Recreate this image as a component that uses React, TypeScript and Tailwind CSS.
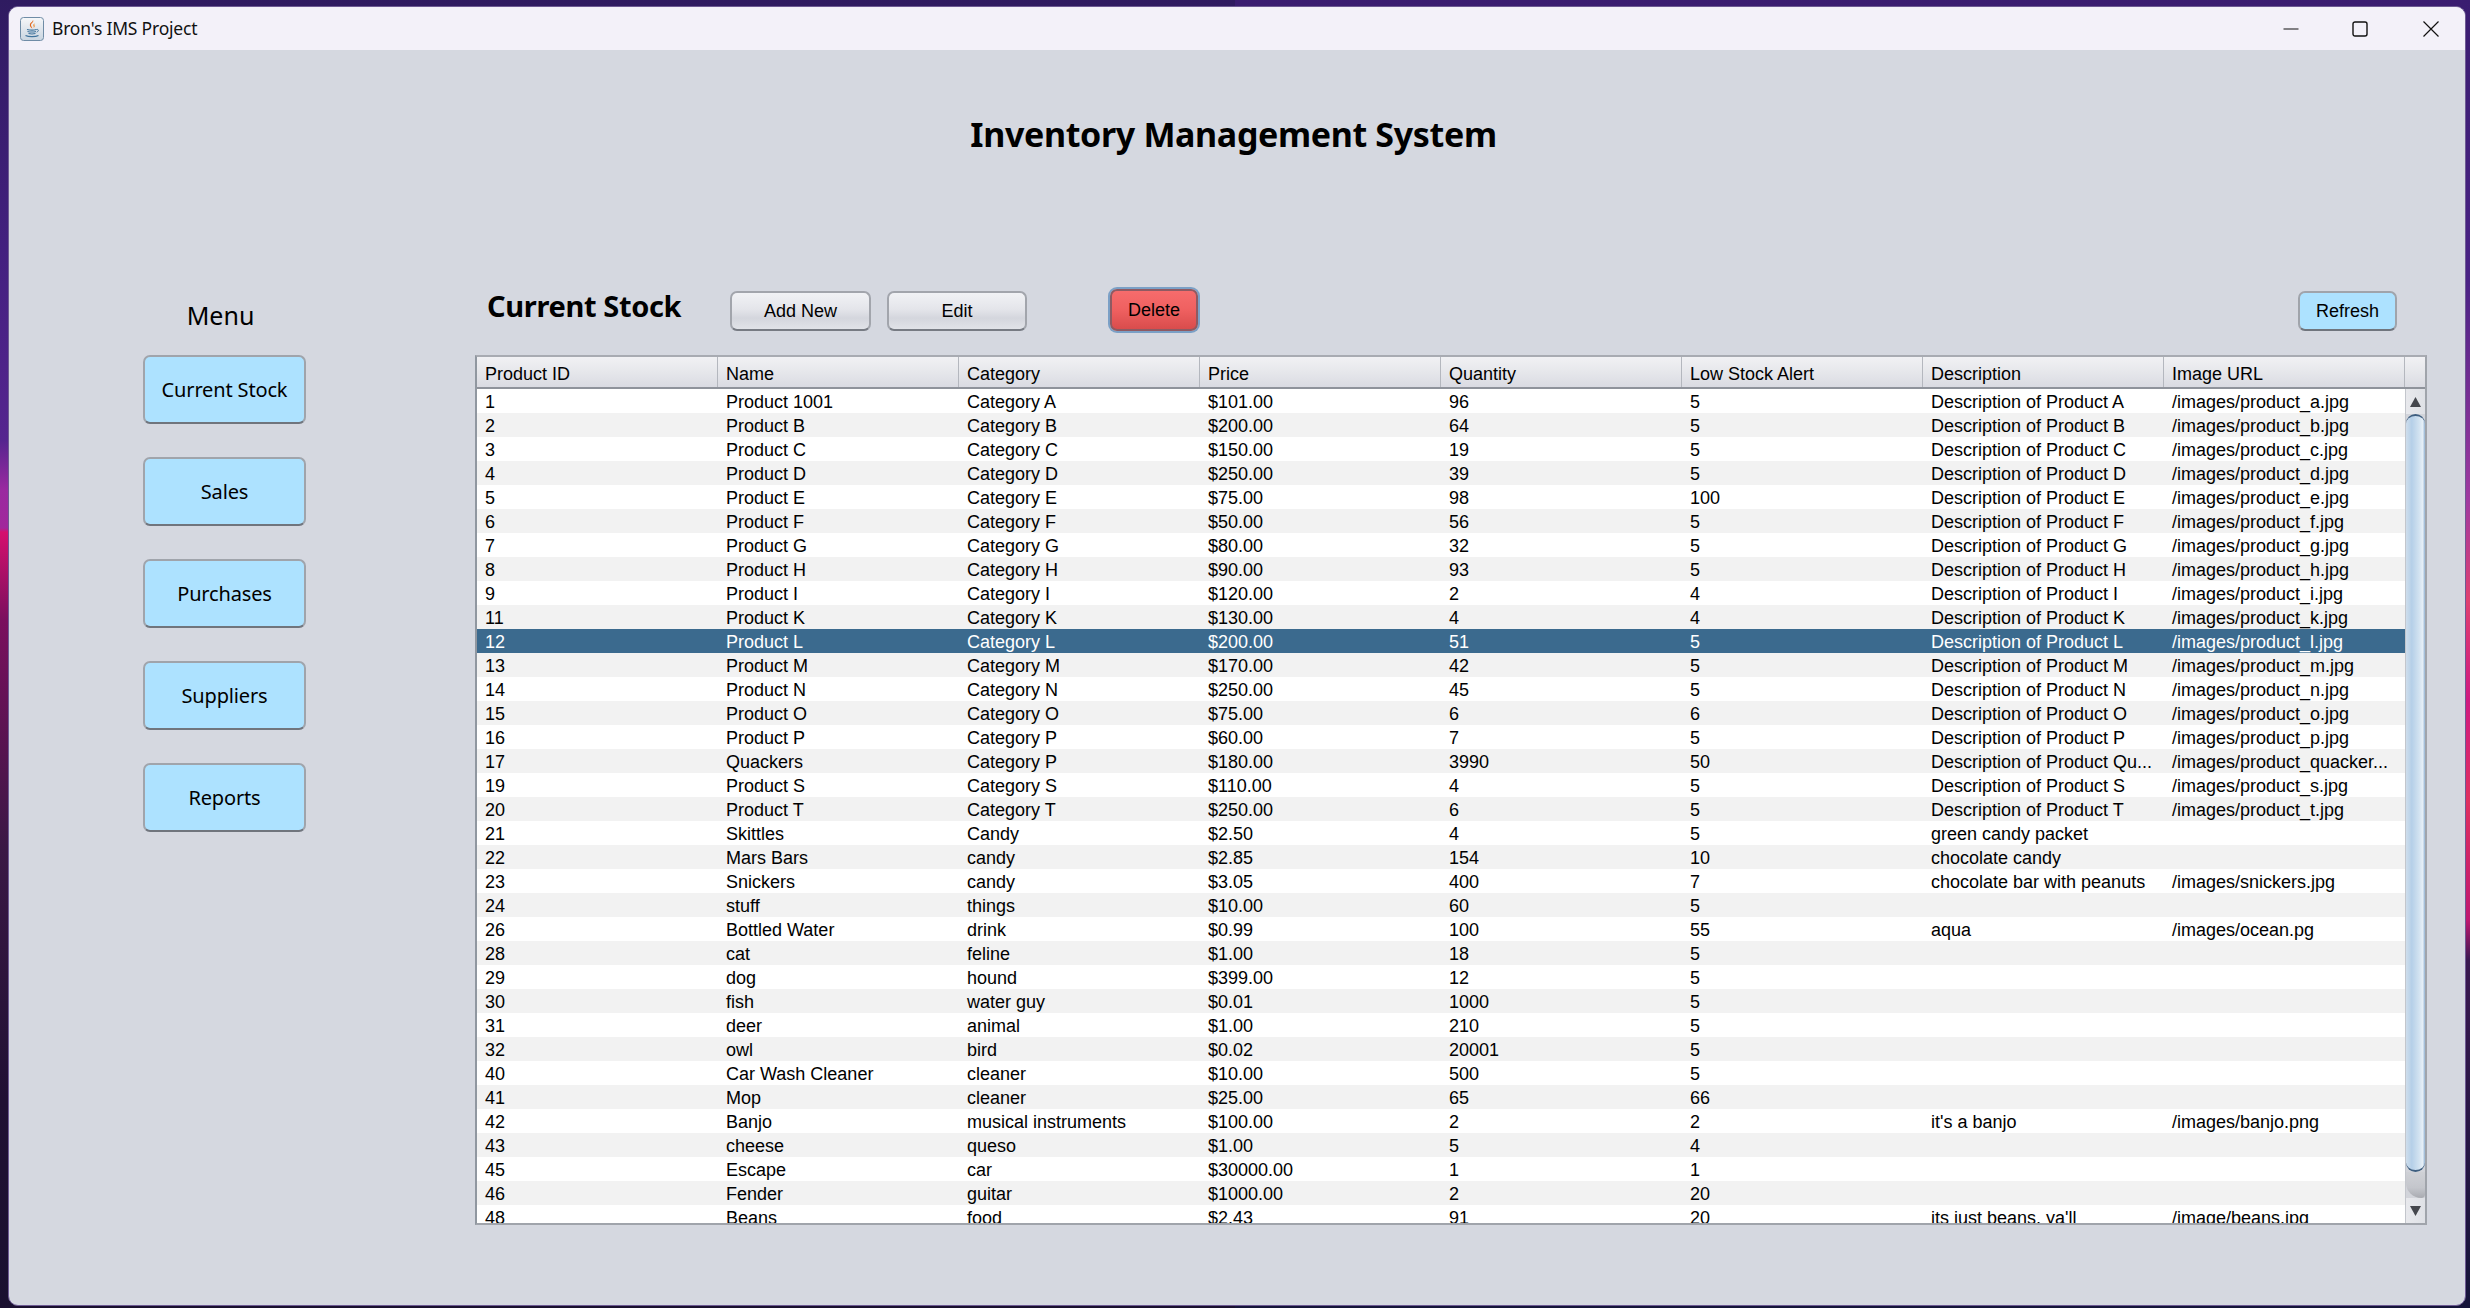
import React from "react";

const D = (c: string) => `Description of Product ${c}`;
const I = (c: string) => `/images/product_${c}.jpg`;
const rows: string[][] = [
  ["1", "Product 1001", "Category A", "$101.00", "96", "5", D("A"), I("a")],
  ["2", "Product B", "Category B", "$200.00", "64", "5", D("B"), I("b")],
  ["3", "Product C", "Category C", "$150.00", "19", "5", D("C"), I("c")],
  ["4", "Product D", "Category D", "$250.00", "39", "5", D("D"), I("d")],
  ["5", "Product E", "Category E", "$75.00", "98", "100", D("E"), I("e")],
  ["6", "Product F", "Category F", "$50.00", "56", "5", D("F"), I("f")],
  ["7", "Product G", "Category G", "$80.00", "32", "5", D("G"), I("g")],
  ["8", "Product H", "Category H", "$90.00", "93", "5", D("H"), I("h")],
  ["9", "Product I", "Category I", "$120.00", "2", "4", D("I"), I("i")],
  ["11", "Product K", "Category K", "$130.00", "4", "4", D("K"), I("k")],
  ["12", "Product L", "Category L", "$200.00", "51", "5", D("L"), I("l")],
  ["13", "Product M", "Category M", "$170.00", "42", "5", D("M"), I("m")],
  ["14", "Product N", "Category N", "$250.00", "45", "5", D("N"), I("n")],
  ["15", "Product O", "Category O", "$75.00", "6", "6", D("O"), I("o")],
  ["16", "Product P", "Category P", "$60.00", "7", "5", D("P"), I("p")],
  ["17", "Quackers", "Category P", "$180.00", "3990", "50", "Description of Product Qu...", "/images/product_quacker..."],
  ["19", "Product S", "Category S", "$110.00", "4", "5", D("S"), I("s")],
  ["20", "Product T", "Category T", "$250.00", "6", "5", D("T"), I("t")],
  ["21", "Skittles", "Candy", "$2.50", "4", "5", "green candy packet", ""],
  ["22", "Mars Bars", "candy", "$2.85", "154", "10", "chocolate candy", ""],
  ["23", "Snickers", "candy", "$3.05", "400", "7", "chocolate bar with peanuts", "/images/snickers.jpg"],
  ["24", "stuff", "things", "$10.00", "60", "5", "", ""],
  ["26", "Bottled Water", "drink", "$0.99", "100", "55", "aqua", "/images/ocean.pg"],
  ["28", "cat", "feline", "$1.00", "18", "5", "", ""],
  ["29", "dog", "hound", "$399.00", "12", "5", "", ""],
  ["30", "fish", "water guy", "$0.01", "1000", "5", "", ""],
  ["31", "deer", "animal", "$1.00", "210", "5", "", ""],
  ["32", "owl", "bird", "$0.02", "20001", "5", "", ""],
  ["40", "Car Wash Cleaner", "cleaner", "$10.00", "500", "5", "", ""],
  ["41", "Mop", "cleaner", "$25.00", "65", "66", "", ""],
  ["42", "Banjo", "musical instruments", "$100.00", "2", "2", "it's a banjo", "/images/banjo.png"],
  ["43", "cheese", "queso", "$1.00", "5", "4", "", ""],
  ["45", "Escape", "car", "$30000.00", "1", "1", "", ""],
  ["46", "Fender", "guitar", "$1000.00", "2", "20", "", ""],
  ["48", "Beans", "food", "$2.43", "91", "20", "its just beans, ya'll", "/image/beans.jpg"],
];
const headers = ["Product ID", "Name", "Category", "Price", "Quantity", "Low Stock Alert", "Description", "Image URL"];
const menu = ["Current Stock", "Sales", "Purchases", "Suppliers", "Reports"];

function JavaIcon() {
  return (
    <svg width="24" height="24" viewBox="0 0 24 24" className="shrink-0">
      <defs>
        <linearGradient id="jv" x1="0" y1="0" x2="0" y2="1">
          <stop offset="0" stopColor="#f6f7f9" />
          <stop offset="1" stopColor="#c9d5e0" />
        </linearGradient>
      </defs>
      <rect x="0.5" y="0.5" width="23" height="23" rx="3" fill="url(#jv)" stroke="#6f8ca6" />
      <path d="M13 3c1.6 2.2-3 3.2-1.8 6 .4 1 1 1.6 1.2 2.6-1.2-.9-3.4-2.4-2.2-5C10.900 5.300 12.700 4.800 13 3z" fill="#e2661c" />
      <path d="M15.500 6c-1.800.9-2.700 1.700-2 3.100.3.600.4 1.200.1 1.900 1.200-.9 1.400-1.900.9-2.700-.4-.8 0-1.500 1-2.300z" fill="#ee8a2a" />
      <path d="M7 12.500c2.500.6 7.500.6 9.500 0M7.500 14.500c2.500.6 6.500.6 8.500 0M8.500 16.500c2 .5 5 .5 7 0" stroke="#3f739c" strokeWidth="1.100" fill="none" />
      <path d="M16.500 12.500c2.200-.6 2.600 1.700.2 2.700" stroke="#3f739c" strokeWidth="1" fill="none" />
      <path d="M5.500 18.500c3 1.500 10 1.500 13 0" stroke="#3f739c" strokeWidth="1.300" fill="none" />
    </svg>
  );
}

function GrayButton({ label, w }: { label: string; w: string }) {
  return (
    <button className={`${w} mt-[3px] h-[40px] rounded-[7px] border-2 border-[#a2a5ac] border-b-[#777b83] bg-[linear-gradient(180deg,#f1f2f5_0%,#e4e5ea_45%,#d4d6dd_70%,#e1e3e8_100%)] text-[18px] text-black`}>
      {label}
    </button>
  );
}

export default function App() {
  return (
    <div className="flex h-[1308px] w-[2470px] overflow-hidden bg-[linear-gradient(180deg,#2f1b60_0px,#43207f_250px,#55258f_440px,#9a2aa0_490px,#a1289c_528px,#d5106e_532px,#7a0f5e_620px,#3a1845_850px,#201033_1100px,#1a1030_1308px),linear-gradient(180deg,#3a1d70_0px,#4a2285_280px,#a03aa0_500px,#e04070_600px,#d01a80_700px,#e03060_800px,#c01870_920px,#3a1850_960px,#15143a_1308px)] bg-[length:50%_100%] bg-[position:left,right] bg-no-repeat pb-[2px] pl-[8px] pr-[4px] pt-[6px] font-['Liberation_Sans',sans-serif] text-black">
      <div className="flex flex-1 flex-col overflow-hidden rounded-[10px] border border-[#6d5a93] bg-[#d5d8e0]">
        {/* title bar */}
        <div className="flex h-[43px] shrink-0 items-center bg-[#f3f1f9] pl-[11px] pr-[26px]">
          <JavaIcon />
          <span className="ml-[8px] font-['Noto_Sans',sans-serif] text-[17.500px] tracking-[-0.2px] text-[#111]">Bron's IMS Project</span>
          <div className="ml-auto flex items-center">
            <svg width="16" height="16" viewBox="0 0 16 16"><path d="M0.5 8h15" stroke="#111" strokeWidth="1.2" /></svg>
            <svg width="16" height="16" viewBox="0 0 16 16" className="ml-[53px]"><rect x="1" y="1" width="14" height="14" rx="2" fill="none" stroke="#111" strokeWidth="1.4" /></svg>
            <svg width="16" height="16" viewBox="0 0 16 16" className="ml-[55px]"><path d="M0.5 0.5l15 15M15.5 0.5l-15 15" stroke="#111" strokeWidth="1.2" /></svg>
          </div>
        </div>

        {/* heading */}
        <div className="flex h-[168px] shrink-0 items-center justify-center pr-[7px]">
          <h1 className="font-['Noto_Sans',sans-serif] text-[34px] font-bold tracking-[-0.35px]">Inventory Management System</h1>
        </div>

        {/* main */}
        <div className="mt-[70px] flex pl-[134px]">
          <div className="flex w-[163px] shrink-0 flex-col">
            <div className="flex h-[56px] items-center justify-center pr-[8px] font-['Noto_Sans',sans-serif] text-[25px]">Menu</div>
            <div className="mt-[11px] flex flex-col gap-[33px]">
              {menu.map((m) => (
                <button key={m} className="h-[69px] rounded-[7px] border-2 border-[#a0a4ab] border-b-[#70757d] bg-[#ade2ff] pt-[1px] font-['Noto_Sans',sans-serif] text-[20px] tracking-[-0.15px]">
                  {m}
                </button>
              ))}
            </div>
          </div>

          <div className="ml-[169px] flex w-[1952px] shrink-0 flex-col">
            <div className="flex h-[67px] items-start">
              <div className="w-[255px] pl-[12px] font-['Noto_Sans',sans-serif] text-[29px] font-bold leading-[35px] tracking-[-0.35px]">Current Stock</div>
              <GrayButton label="Add New" w="w-[141px]" />
              <GrayButton label="Edit" w="ml-[16px] w-[140px]" />
              <button className="ml-[83px] mt-[1px] h-[42px] w-[88px] rounded-[7px] border-2 border-[#8f5a62] bg-[linear-gradient(180deg,#f66c6c_0%,#ef6060_50%,#d94c4c_100%)] text-[18px] shadow-[0_0_0_2px_#7ba0c6]">
                Delete
              </button>
              <button className="ml-auto mr-[30px] mt-[3px] h-[40px] w-[99px] rounded-[7px] border-2 border-[#a0a4ab] border-b-[#70757d] bg-[#ade2ff] text-[18px]">
                Refresh
              </button>
            </div>

            {/* table */}
            <div className="flex h-[870px] flex-col overflow-hidden border-2 border-[#a0a4ab] border-l-[#9097a0] border-t-[#a8abb2]">
              <div className="flex h-[32px] shrink-0 border-b-2 border-[#8f939b] bg-[linear-gradient(180deg,#f1f1f4_0%,#e6e7eb_50%,#dadbe2_100%)]">
                <div className="grid w-[1928px] grid-cols-8">
                  {headers.map((h) => (
                    <div key={h} className="flex items-center border-r border-[#b4b7be] pl-[8px] pt-[3px] text-[18px] leading-none">
                      {h}
                    </div>
                  ))}
                </div>
                <div className="flex-1" />
              </div>
              <div className="flex min-h-0 flex-1">
                <div className="w-[1928px] overflow-hidden bg-white">
                  {rows.map((r, i) => (
                    <div
                      key={r[0]}
                      className={`grid h-[24px] grid-cols-8 text-[18px] ${
                        i === 10 ? "bg-[#3b6a8e] text-white" : i % 2 === 1 ? "bg-[#f2f2f2]" : "bg-white"
                      }`}
                    >
                      {r.map((c, j) => (
                        <div key={j} className="overflow-hidden whitespace-nowrap pl-[8px] pt-[3px] leading-[21px]">
                          {c}
                        </div>
                      ))}
                    </div>
                  ))}
                </div>
                {/* scrollbar */}
                <div className="flex flex-1 flex-col border-l border-[#c3c6cc] bg-[#d2d4da]">
                  <div className="flex h-[25px] shrink-0 items-center justify-center bg-[linear-gradient(90deg,#e8e9ed,#dfe1e6)]">
                    <svg width="11" height="10" viewBox="0 0 11 10"><path d="M5.5 0L11 10H0z" fill="#45474d" /></svg>
                  </div>
                  <div className="h-[758px] shrink-0 rounded-[18px] border-y-2 border-[#3f5f80] bg-[linear-gradient(90deg,#cfdeec_0%,#b5cfe8_30%,#d3e3f1_70%,#e6eff7_88%,#93b3d3_100%)]" />
                  <div className="h-[26px] shrink-0 rounded-bl-[16px] rounded-br-[4px] bg-[linear-gradient(180deg,#cfd1d6_0%,#c4c6cc_60%,#a9abb1_100%)]" />
                  <div className="flex min-h-0 flex-1 items-center justify-center bg-[linear-gradient(90deg,#e8e9ed,#dfe1e6)]">
                    <svg width="11" height="10" viewBox="0 0 11 10"><path d="M5.5 10L11 0H0z" fill="#45474d" /></svg>
                  </div>
                </div>
              </div>
            </div>
          </div>
        </div>
      </div>
    </div>
  );
}
